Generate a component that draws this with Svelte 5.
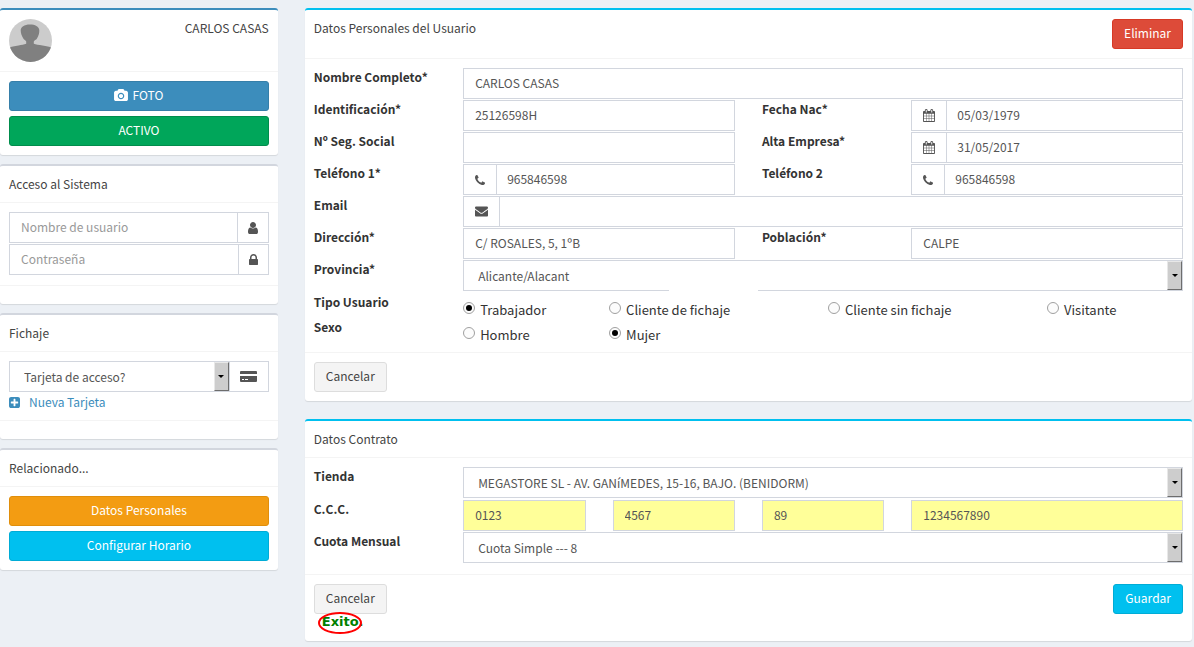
<script lang="ts">
const icons = {
  camera: {
    box: '0 0 1920 1792',
    d: 'M960 672q119 0 203.500 84.500t84.500 203.500-84.500 203.500-203.500 84.500-203.500-84.500-84.500-203.500 84.500-203.500 203.500-84.500zm704-416q106 0 181 75t75 181v896q0 106-75 181t-181 75h-1408q-106 0-181-75t-75-181v-896q0-106 75-181t181-75h224l51-136q19-49 69.500-84.500t103.500-35.500h512q53 0 103.500 35.500t69.500 84.500l51 136h224zm-704 1152q185 0 316.500-131.500t131.500-316.500-131.500-316.500-316.500-131.500-316.500 131.500-131.500 316.500 131.500 316.500 316.500 131.500z',
  },
  user: {
    box: '256 128 1280 1536',
    d: 'M1536 1399q0 109-62.500 187t-150.500 78h-854q-88 0-150.500-78t-62.500-187q0-85 8.500-160.500t31.500-152 58.500-131 94-89 134.500-34.500q131 128 313 128t313-128q76 0 134.500 34.500t94 89 58.500 131 31.500 152 8.500 160.500zm-256-887q0 159-112.500 271.500t-271.500 112.500-271.500-112.500-112.500-271.500 112.500-271.500 271.500-112.500 271.500 112.500 112.500 271.500z',
  },
  lock: {
    box: '320 128 1152 1408',
    d: 'M640 768h512v-192q0-106-75-181t-181-75-181 75-75 181v192zm832 96v576q0 40-28 68t-68 28h-960q-40 0-68-28t-28-68v-576q0-40 28-68t68-28h32v-192q0-184 132-316t316-132 316 132 132 316v192h32q40 0 68 28t28 68z',
  },
  phone: {
    box: '192 128 1408 1408',
    d: 'M1600 1240q0 27-10 70.500t-21 68.500q-21 50-122 106-94 51-186 51-27 0-52.500-3.500t-57.500-12.500-47.500-14.500-55.500-20.500-49-18q-98-35-175-83-128-79-264.500-215.500t-215.500-264.500q-48-77-83-175-3-9-18-49t-20.500-55.500-14.500-47.500-12.500-57.500-3.500-52.500q0-92 51-186 56-101 106-122 25-11 68.500-21t70.500-10q14 0 21 3 18 6 53 76 11 19 30 54t35 63.500 31 53.500q3 4 17.500 25t21.500 35.500 7 28.500q0 20-28.500 50t-62 55-62 53-28.500 46q0 9 5 22.500t8.500 20.500 14 24 11.500 19q76 137 174 235t235 174q2 1 19 11.500t24 14 20.500 8.500 22.500 5q18 0 46-28.500t53-62 55-62 50-28.500q14 0 28.500 7t35.500 21.500 25 17.500q25 15 53.500 31t63.500 35 54 30q70 35 76 53 3 7 3 21z',
  },
  calendar: {
    box: '64 0 1664 1792',
    d: 'M192 1664h288v-288h-288v288zm352 0h320v-288h-320v288zm-352-352h288v-320h-288v320zm352 0h320v-320h-320v320zm-352-384h288v-288h-288v288zm736 736h320v-288h-320v288zm-384-736h320v-288h-320v288zm768 736h288v-288h-288v288zm-384-352h320v-320h-320v320zm-352-864v-288q0-13-9.500-22.500t-22.500-9.500h-64q-13 0-22.500 9.500t-9.500 22.500v288q0 13 9.500 22.500t22.500 9.500h64q13 0 22.500-9.500t9.500-22.500zm736 864h288v-320h-288v320zm-384-384h320v-288h-320v288zm384 0h288v-288h-288v288zm32-480v-288q0-13-9.500-22.500t-22.500-9.500h-64q-13 0-22.500 9.500t-9.500 22.500v288q0 13 9.500 22.500t22.500 9.500h64q13 0 22.500-9.500t9.500-22.500zm384-64v1280q0 52-38 90t-90 38h-1408q-52 0-90-38t-38-90v-1280q0-52 38-90t90-38h128v-96q0-66 47-113t113-47h64q66 0 113 47t47 113v96h384v-96q0-66 47-113t113-47h64q66 0 113 47t47 113v96h128q52 0 90 38t38 90z',
  },
  envelope: {
    box: '0 256 1792 1408',
    d: 'M1792 710v794q0 66-47 113t-113 47h-1472q-66 0-113-47t-47-113v-794q44 49 101 87 362 246 497 345 57 42 92.500 65.500t94.500 48 110 24.500h2q51 0 110-24.500t94.500-48 92.500-65.500q170-123 498-345 57-39 100-87zm0-294q0 79-49 151t-122 123q-376 261-468 325-10 7-42.500 31t-54 38.500-52 32.500-57.500 27-50 9h-2q-23 0-50-9t-57.500-27-52-32.500-54-38.500-42.500-31q-91-64-262-182.500t-205-142.500q-62-42-117-115.500t-55-136.500q0-78 41.500-130t118.500-52h1472q65 0 112.500 47t47.500 113z',
  },
  card: {
    box: '0 0 18 11',
    d: 'M1 0h15q1 0 1 1v2H0V1q0-1 1-1zM0 5h17v5q0 1-1 1H1q-1 0-1-1zM2 8v1h2V8zm3 0v1h3V8z',
  },
  plus: {
    box: '128 128 1536 1536',
    d: 'M1408 960v-128q0-26-19-45t-45-19h-320v-320q0-26-19-45t-45-19h-128q-26 0-45 19t-19 45v320h-320q-26 0-45 19t-19 45v128q0 26 19 45t45 19h320v320q0 26 19 45t45 19h128q26 0 45-19t19-45v-320h320q26 0 45-19t19-45zm256-544v960q0 119-84.500 203.500t-203.500 84.500h-960q-119 0-203.500-84.500t-84.500-203.500v-960q0-119 84.500-203.500t203.500-84.500h960q119 0 203.500 84.500t84.500 203.500z',
  },
}

type Icon = keyof typeof icons

const tipos = ['Trabajador', 'Cliente de fichaje', 'Cliente sin fichaje', 'Visitante']
const sexos = ['Hombre', 'Mujer']

let tipo = $state('Trabajador')
let sexo = $state('Mujer')
let ccc = $state(['0123', '4567', '89', '1234567890'])
</script>

{#snippet icon(name: Icon)}
  <svg class="icon icon--{name}" viewBox={icons[name].box} aria-hidden="true">
    <path d={icons[name].d} fill-rule={name === 'card' ? 'evenodd' : 'nonzero'} />
  </svg>
{/snippet}

{#snippet field(id: string, label: string, value: string, size: string, addon?: Icon)}
  <label class="label" for={id}>{label}</label>
  <div class="group {size}">
    {#if addon}
      <span class="addon">{@render icon(addon)}</span>
    {/if}
    <input class="input" class:input--joined={addon} type="text" {id} {value} />
  </div>
{/snippet}

{#snippet select(id: string, value: string)}
  <div class="select">
    <select class="input select__input" {id}>
      <option>{value}</option>
    </select>
    <span class="select__arrow"></span>
  </div>
{/snippet}

{#snippet radios(name: string, options: string[], current: string, pick: (v: string) => void)}
  <div class="radios" role="radiogroup" aria-labelledby="{name}-label">
    {#each options as option}
      <label class="radio">
        <input
          class="radio__input"
          type="radio"
          {name}
          value={option}
          checked={option === current}
          onchange={() => pick(option)}
        />
        {option}
      </label>
    {/each}
  </div>
{/snippet}

<div class="page">
  <aside class="side">
    <section class="box box--primary">
      <header class="box__header">
        <svg class="avatar" viewBox="0 0 43 43" role="img" aria-label="Foto de usuario">
          <clipPath id="avatar-clip"><circle cx="21.5" cy="21.5" r="21.5" /></clipPath>
          <g clip-path="url(#avatar-clip)">
            <rect width="43" height="43" fill="#ccc" />
            <path
              fill="#808080"
              d="M21 5.500c5 0 9 2 9.300 5.500.200 3-.800 6-2.300 8.500-.800 1.300-2.800 2-3.200 3v2.300c2 1 5 1.200 8.700 1.700 4 .500 7 1 9.500 2.500v14H0V29c2-1.500 5.500-2 9.500-2.500 3-.500 5.500-.700 7.700-1.700v-2.300c-.500-1-2-1.700-2.900-3-1.500-2.500-2.700-5.500-2.600-8.500.200-3 3.300-5.500 9.300-5.500z"
            />
          </g>
        </svg>
        <span>CARLOS CASAS</span>
      </header>
      <div class="box__body box__body--stack">
        <button class="btn btn--primary" type="button">{@render icon('camera')} FOTO</button>
        <button class="btn btn--success" type="button">ACTIVO</button>
      </div>
    </section>

    <section class="box">
      <header class="box__header">Acceso al Sistema</header>
      <div class="box__body">
        <div class="row">
          <div class="group">
            <input class="input" type="text" placeholder="Nombre de usuario" aria-label="Nombre de usuario" />
            <span class="addon addon--end">{@render icon('user')}</span>
          </div>
        </div>
        <div class="row">
          <div class="group">
            <input class="input" type="password" placeholder="Contraseña" aria-label="Contraseña" />
            <span class="addon addon--end">{@render icon('lock')}</span>
          </div>
        </div>
      </div>
      <footer class="box__footer"></footer>
    </section>

    <section class="box">
      <header class="box__header"><label for="tarjeta">Fichaje</label></header>
      <div class="box__body">
        <div class="row">
          <div class="group">
            {@render select('tarjeta', 'Tarjeta de acceso?')}
            <span class="addon addon--end">{@render icon('card')}</span>
          </div>
        </div>
        <a class="link" href="#nueva-tarjeta">{@render icon('plus')} Nueva Tarjeta</a>
      </div>
      <footer class="box__footer"></footer>
    </section>

    <section class="box">
      <header class="box__header">Relacionado...</header>
      <div class="box__body box__body--stack">
        <button class="btn btn--warning" type="button">Datos Personales</button>
        <button class="btn btn--info" type="button">Configurar Horario</button>
      </div>
    </section>
  </aside>

  <main class="main">
    <form class="box box--info">
      <header class="box__header">
        <span>Datos Personales del Usuario</span>
        <button class="btn btn--danger" type="button">Eliminar</button>
      </header>
      <div class="box__body">
        <div class="row cols">
          {@render field('nombre', 'Nombre Completo*', 'CARLOS CASAS', 'span-10')}
        </div>
        <div class="row cols">
          {@render field('identificacion', 'Identificación*', '25126598H', 'span-4')}
          {@render field('fecha-nac', 'Fecha Nac*', '05/03/1979', 'span-4', 'calendar')}
        </div>
        <div class="row cols">
          {@render field('seg-social', 'Nº Seg. Social', '', 'span-4')}
          {@render field('alta', 'Alta Empresa*', '31/05/2017', 'span-4', 'calendar')}
        </div>
        <div class="row cols">
          {@render field('telefono-1', 'Teléfono 1*', '965846598', 'span-4', 'phone')}
          {@render field('telefono-2', 'Teléfono 2', '965846598', 'span-4', 'phone')}
        </div>
        <div class="row cols">
          {@render field('email', 'Email', '', 'span-10', 'envelope')}
        </div>
        <div class="row cols">
          {@render field('direccion', 'Dirección*', 'C/ ROSALES, 5, 1ºB', 'span-4')}
          {@render field('poblacion', 'Población*', 'CALPE', 'span-4')}
        </div>
        <div class="row row--select cols">
          <label class="label" for="provincia">Provincia*</label>
          <div class="group group--cut span-10">{@render select('provincia', 'Alicante/Alacant')}</div>
        </div>
        <div class="row row--radios cols">
          <span class="label" id="tipo-label">Tipo Usuario</span>
          {@render radios('tipo', tipos, tipo, (v) => (tipo = v))}
        </div>
        <div class="row row--radios cols">
          <span class="label" id="sexo-label">Sexo</span>
          {@render radios('sexo', sexos, sexo, (v) => (sexo = v))}
        </div>
      </div>
      <footer class="box__footer">
        <button class="btn btn--default" type="button">Cancelar</button>
      </footer>
    </form>

    <form class="box box--info">
      <header class="box__header">Datos Contrato</header>
      <div class="box__body">
        <div class="row row--select cols">
          <label class="label" for="tienda">Tienda</label>
          <div class="group span-10">
            {@render select('tienda', 'MEGASTORE SL - AV. GANíMEDES, 15-16, BAJO. (BENIDORM)')}
          </div>
        </div>
        <div class="row cols">
          <label class="label" for="ccc-0">C.C.C.</label>
          {#each ccc as _, i}
            <div class="group {i === 3 ? 'span-4' : 'span-2'}">
              <input
                class="input input--filled"
                type="text"
                id="ccc-{i}"
                aria-label="C.C.C. {i + 1}"
                bind:value={ccc[i]}
              />
            </div>
          {/each}
        </div>
        <div class="row row--select cols">
          <label class="label" for="cuota">Cuota Mensual</label>
          <div class="group span-10">{@render select('cuota', 'Cuota Simple --- 8')}</div>
        </div>
      </div>
      <footer class="box__footer">
        <div>
          <button class="btn btn--default" type="button">Cancelar</button>
          <div class="status">
            Exito.
            <svg class="status__ring" viewBox="0 0 44 24" aria-hidden="true">
              <ellipse cx="22" cy="12" rx="21" ry="10" />
            </svg>
          </div>
        </div>
        <button class="btn btn--info" type="button">Guardar</button>
      </footer>
    </form>
  </main>
</div>

<style>
  :global(body) {
    margin: 0;
    background: #ecf0f5;
  }

  .page {
    display: grid;
    grid-template-columns: repeat(12, minmax(0, 1fr));
    column-gap: 27px;
    padding: 8px 2px 6px 0;
    font-family: 'Source Sans Pro', 'Noto Sans CJK SC', sans-serif;
    font-size: 12px;
    line-height: 18px;
    color: #444;
  }

  .page *,
  .page *::before,
  .page *::after {
    box-sizing: border-box;
  }

  .side,
  .main {
    display: flex;
    flex-direction: column;
  }

  .side {
    grid-column: span 3;
    gap: 9px;
  }

  .main {
    grid-column: span 9;
    gap: 18px;
  }

  .box {
    background: #fff;
    border-top: 2px solid #d2d6de;
    border-radius: 3px;
    box-shadow: 0 1px 1px rgba(0, 0, 0, 0.1);
  }

  .box--primary {
    border-top-color: #3c8dbc;
  }

  .box--info {
    border-top-color: #00c0ef;
  }

  .box__header {
    display: flex;
    justify-content: space-between;
    align-items: flex-start;
    padding: 9px;
    border-bottom: 1px solid #f4f4f4;
  }

  .box__body {
    padding: 9px;
  }

  .box__body--stack {
    display: flex;
    flex-direction: column;
    gap: 5px;
  }

  .box__footer {
    display: flex;
    justify-content: space-between;
    align-items: flex-start;
    padding: 9px;
    border-top: 1px solid #f4f4f4;
  }

  .avatar {
    width: 43px;
    height: 43px;
  }

  .row {
    height: 32px;
  }

  .row--select {
    height: 33px;
  }

  .row--radios {
    height: 25px;
  }

  .cols {
    display: grid;
    grid-template-columns: repeat(12, minmax(0, 1fr));
    column-gap: 27px;
    align-items: start;
  }

  .span-2 {
    grid-column: span 2;
  }

  .span-4 {
    grid-column: span 4;
  }

  .span-10 {
    grid-column: span 10;
  }

  .label {
    grid-column: span 2;
    font-weight: 700;
    color: #333;
    white-space: nowrap;
  }

  .group {
    position: relative;
    display: flex;
    height: 31px;
    border: 1px solid #d2d6de;
    background: #fff;
  }

  .input {
    flex: 1;
    width: 100%;
    min-width: 0;
    height: 100%;
    margin: 0;
    padding: 0 11px 2px;
    border: 0;
    border-radius: 0;
    background: none;
    font: inherit;
    color: #555;
  }

  .input::placeholder {
    color: #999;
    opacity: 1;
  }

  .input--joined {
    padding-left: 10px;
  }

  .input--filled {
    background: #ff9;
  }

  .addon {
    display: flex;
    align-items: center;
    padding: 0 11px;
    border-right: 1px solid #d2d6de;
    color: #555;
  }

  .addon--end {
    padding: 0 10px;
    border-right: 0;
    border-left: 1px solid #d2d6de;
  }

  .select {
    position: relative;
    flex: 1;
    min-width: 0;
  }

  .select__input {
    appearance: none;
    padding: 0 24px 0 14px;
  }

  .select__arrow {
    position: absolute;
    top: 0;
    right: 0;
    bottom: 0;
    width: 15px;
    display: flex;
    align-items: center;
    justify-content: center;
    background: #cdcdcd;
    border: 1px solid #e8e8e8;
    border-right-color: #6d6d6d;
    border-bottom-color: #6d6d6d;
    pointer-events: none;
  }

  .select__arrow::after {
    content: '';
    border: 3px solid transparent;
    border-top-color: #000;
    border-bottom: 0;
  }

  /* break in the lower border of the province list */
  .group--cut::after {
    content: '';
    position: absolute;
    top: 100%;
    left: 205px;
    width: 89px;
    height: 1px;
    background: #fff;
  }

  .radios {
    grid-column: span 10;
    display: grid;
    grid-template-columns: 146fr 219fr 219fr 136fr;
    padding-top: 8px;
    font-size: 13px;
    color: #333;
  }

  .radio {
    display: flex;
    align-items: flex-start;
    gap: 5px;
    white-space: nowrap;
  }

  .radio__input {
    appearance: none;
    flex: none;
    display: grid;
    place-items: center;
    width: 12px;
    height: 12px;
    margin: 1px 0 0;
    border: 1px solid #a0a0a0;
    border-radius: 50%;
    background: #fcfcfc;
  }

  .radio__input:checked::before {
    content: '';
    width: 6px;
    height: 6px;
    border-radius: 50%;
    background: #000;
  }

  .btn {
    display: inline-flex;
    align-items: center;
    justify-content: center;
    gap: 4px;
    height: 30px;
    padding: 0 11px 2px;
    border: 1px solid;
    border-radius: 3px;
    font: inherit;
    color: #fff;
    cursor: pointer;
  }

  .btn--primary {
    background: #3c8dbc;
    border-color: #367fa9;
  }

  .btn--success {
    background: #00a65a;
    border-color: #008d4c;
  }

  .btn--warning {
    background: #f39c12;
    border-color: #e08e0b;
  }

  .btn--info {
    background: #00c0ef;
    border-color: #00acd6;
  }

  .btn--danger {
    background: #dd4b39;
    border-color: #d73925;
  }

  .btn--default {
    background: #f4f4f4;
    border-color: #ddd;
    color: #444;
  }

  .link {
    display: flex;
    align-items: center;
    gap: 9px;
    color: #3c8dbc;
    text-decoration: none;
  }

  .status {
    position: relative;
    width: max-content;
    margin-left: 8px;
    font-family: 'DejaVu Sans', sans-serif;
    font-size: 13px;
    font-weight: 700;
    line-height: 16px;
    padding-bottom: 2px;
    color: #008000;
  }

  .status__ring {
    position: absolute;
    top: -3px;
    left: -4px;
    width: 44px;
    height: 24px;
    fill: none;
    stroke: #f00;
    stroke-width: 2;
  }

  .icon {
    display: block;
    flex: none;
    fill: currentColor;
  }

  .icon--camera {
    width: 14px;
    height: 13px;
  }

  .icon--user {
    width: 10px;
    height: 12px;
  }

  .icon--lock {
    width: 9px;
    height: 11px;
  }

  .icon--phone {
    width: 10px;
    height: 10px;
  }

  .icon--calendar {
    width: 12px;
    height: 13px;
  }

  .icon--envelope {
    width: 13px;
    height: 11px;
  }

  .icon--card {
    width: 18px;
    height: 11px;
  }

  .icon--plus {
    width: 11px;
    height: 11px;
  }
</style>
